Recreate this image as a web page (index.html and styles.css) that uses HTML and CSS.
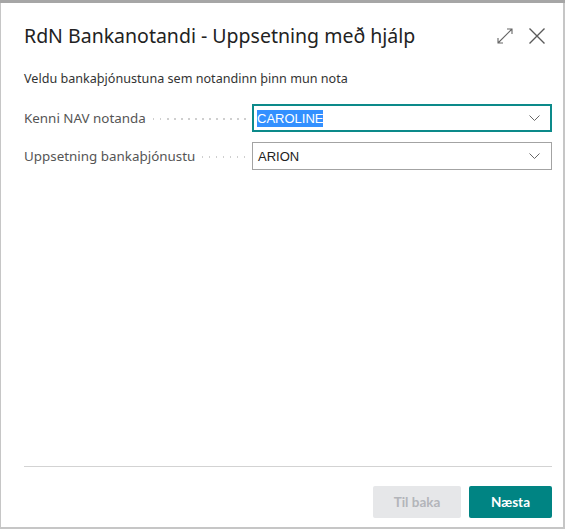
FILE: index.html
```html
<!DOCTYPE html>
<html>
<head>
<meta charset="utf-8">
<link rel="stylesheet" href="styles.css">
</head>
<body>
<div class="topband"></div>
<div class="dialog">
  <div class="header">
    <h1 class="title">RdN Bankanotandi - Uppsetning með hjálp</h1>
    <div class="header-icons">
      <svg class="icon" width="18" height="18" viewBox="0 0 18 18"><path d="M2 16 L16 2 M11 2 H16 V7 M2 11 V16 H7" fill="none" stroke="#666" stroke-width="1.1"/></svg>
      <svg class="icon" width="18" height="18" viewBox="0 0 18 18"><path d="M1.5 1.5 L16.5 16.5 M16.5 1.5 L1.5 16.5" fill="none" stroke="#5a5a5a" stroke-width="1.4"/></svg>
    </div>
  </div>
  <p class="intro">Veldu bankaþjónustuna sem notandinn þinn mun nota</p>
  <div class="fields">
    <div class="row">
      <div class="label"><span>Kenni NAV notanda</span><span class="dots"></span></div>
      <div class="select focused"><span class="sel">CAROLINE</span>
        <svg class="chev" width="11" height="6" viewBox="0 0 11 6"><path d="M0.5 0.5 L5.5 5.5 L10.5 0.5" fill="none" stroke="#666" stroke-width="1"/></svg>
      </div>
    </div>
    <div class="row">
      <div class="label"><span>Uppsetning bankaþjónustu</span><span class="dots"></span></div>
      <div class="select"><span class="val">ARION</span>
        <svg class="chev" width="11" height="6" viewBox="0 0 11 6"><path d="M0.5 0.5 L5.5 5.5 L10.5 0.5" fill="none" stroke="#666" stroke-width="1"/></svg>
      </div>
    </div>
  </div>
  <div class="spacer"></div>
  <div class="footer">
    <button class="btn disabled">Til baka</button>
    <button class="btn primary">Næsta</button>
  </div>
</div>
</body>
</html>
```
FILE: styles.css
```css
html, body { margin: 0; padding: 0; background: #fff; }
body { width: 565px; height: 529px; overflow: hidden; font-family: "Noto Sans", "Open Sans", sans-serif; }
.topband { height: 3px; background: #a6a6a6; }
.dialog {
  box-sizing: border-box;
  height: 526px;
  border-left: 1px solid #c6c6c6;
  border-right: 2px solid #c6c6c6;
  border-bottom: 2px solid #c6c6c6;
  display: flex;
  flex-direction: column;
  padding: 0 11px 0 23px;
}
.header { display: flex; align-items: center; justify-content: space-between; height: 65px; }
.title { margin: 0; font-weight: 400; font-size: 19.5px; color: #222; }
.header-icons { display: flex; gap: 14px; margin-right: 6px; }
.intro { margin: 2px 0 0; font-size: 12.6px; color: #333; }
.fields { display: flex; flex-direction: column; gap: 10px; margin-top: 17px; }
.row { display: flex; align-items: center; }
.label { width: 228px; display: flex; align-items: baseline; font-size: 13.4px; color: #555; }
.dots {
  flex: 1; height: 2px; margin: 0 6px 0 7px; transform: translateY(-3px);
  background: repeating-linear-gradient(to right, #cfcfcf 0 1.5px, transparent 1.5px 7px);
}
.select {
  box-sizing: border-box; width: 300px; height: 28px;
  border: 1px solid #a3a3a3;
  display: flex; align-items: center; justify-content: space-between;
  padding: 0 11px 0 4px;
  font-family: "Liberation Sans", Arial, sans-serif; font-size: 13px; color: #222;
}
.select.focused { border: 2px solid #0c8a8a; padding-left: 3px; padding-right: 10px; }
.sel { background: #3390ff; color: #fff; padding: 1px 0; }
.val { padding-left: 1px; }
.spacer { flex: 1; border-bottom: 1px solid #d3d3d3; }
.footer { display: flex; justify-content: flex-end; gap: 8px; padding: 19px 0 9px; }
.btn { height: 32px; border: none; border-radius: 2px; font-family: "Lato", sans-serif; font-weight: 700; font-size: 13.5px; }
.btn.disabled { width: 88px; background: #e6e7e9; color: #b3b5ba; }
.btn.primary { width: 83px; background: #008483; color: #fff; }
```
